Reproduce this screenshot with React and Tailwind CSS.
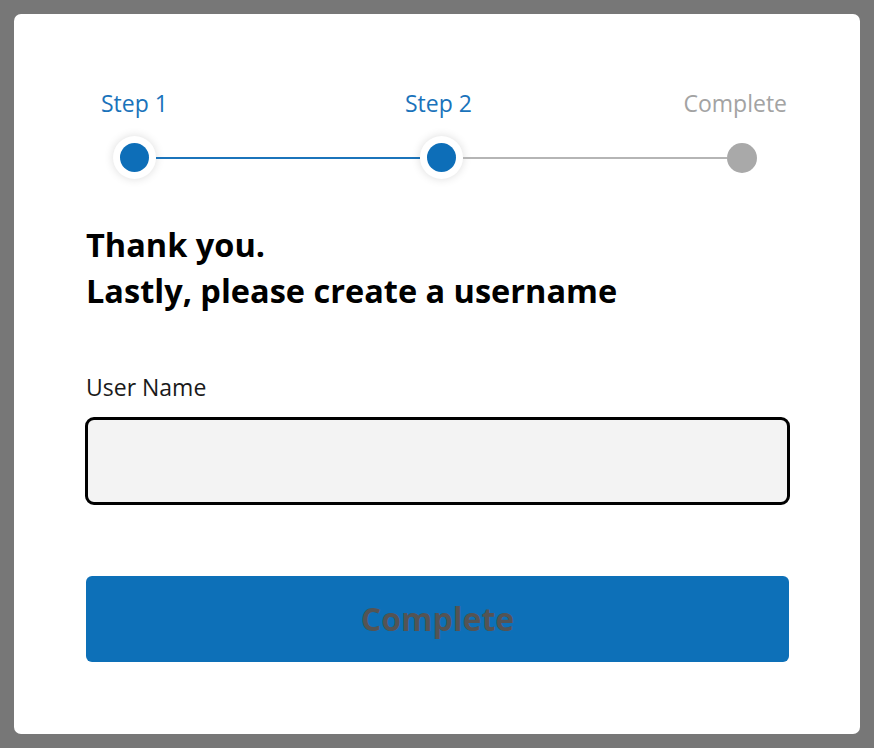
export default function App() {
  return (
    <div className="flex h-[748px] w-[874px] items-start bg-[#777777] p-[14px] font-['Open_Sans',sans-serif]">
      <div className="flex h-[720px] w-[846px] flex-col rounded-[7px] bg-white px-[72px] pt-[74px]">
        {/* stepper labels */}
        <div className="flex text-[23px] leading-[31px]">
          <span className="ml-[15px] w-[304px] text-[#1a73bb]">Step 1</span>
          <span className="text-[#1a73bb]">Step 2</span>
          <span className="ml-auto mr-[1px] text-[#a3a3a3]">Complete</span>
        </div>

        {/* stepper track */}
        <div className="mt-[17px] flex items-center pl-[27px] pr-[31px]">
          <div className="flex h-[43px] w-[43px] items-center justify-center rounded-full bg-white shadow-[0_0_10px_rgba(0,0,0,0.14)]">
            <div className="h-[29px] w-[29px] rounded-full bg-[#0d6eb8]" />
          </div>
          <div className="h-[2px] flex-1 bg-[#1b74bb]" />
          <div className="flex h-[43px] w-[43px] items-center justify-center rounded-full bg-white shadow-[0_0_10px_rgba(0,0,0,0.14)]">
            <div className="h-[29px] w-[29px] rounded-full bg-[#0d6eb8]" />
          </div>
          <div className="h-[2px] flex-1 bg-[#b5b5b5]" />
          <div className="h-[30px] w-[30px] rounded-full bg-[#a9a9a9]" />
        </div>

        <h1 className="mt-[43px] text-[32.5px] font-bold leading-[46px] text-black">
          Thank you.
          <br />
          Lastly, please create a username
        </h1>

        <label className="mt-[58px] text-[23px] leading-[31px] text-[#1a1a1a]">User Name</label>
        <input
          type="text"
          className="mt-[14px] h-[88px] w-[705px] -ml-[1px] rounded-[9px] border-[3px] border-black bg-[#f3f3f3] px-4 outline-none"
        />

        <button
          type="button"
          className="mt-[71px] h-[86px] w-[703px] rounded-[6px] bg-[#0d70b8] text-[32px] font-bold text-[#545454]"
        >
          Complete
        </button>
      </div>
    </div>
  );
}
